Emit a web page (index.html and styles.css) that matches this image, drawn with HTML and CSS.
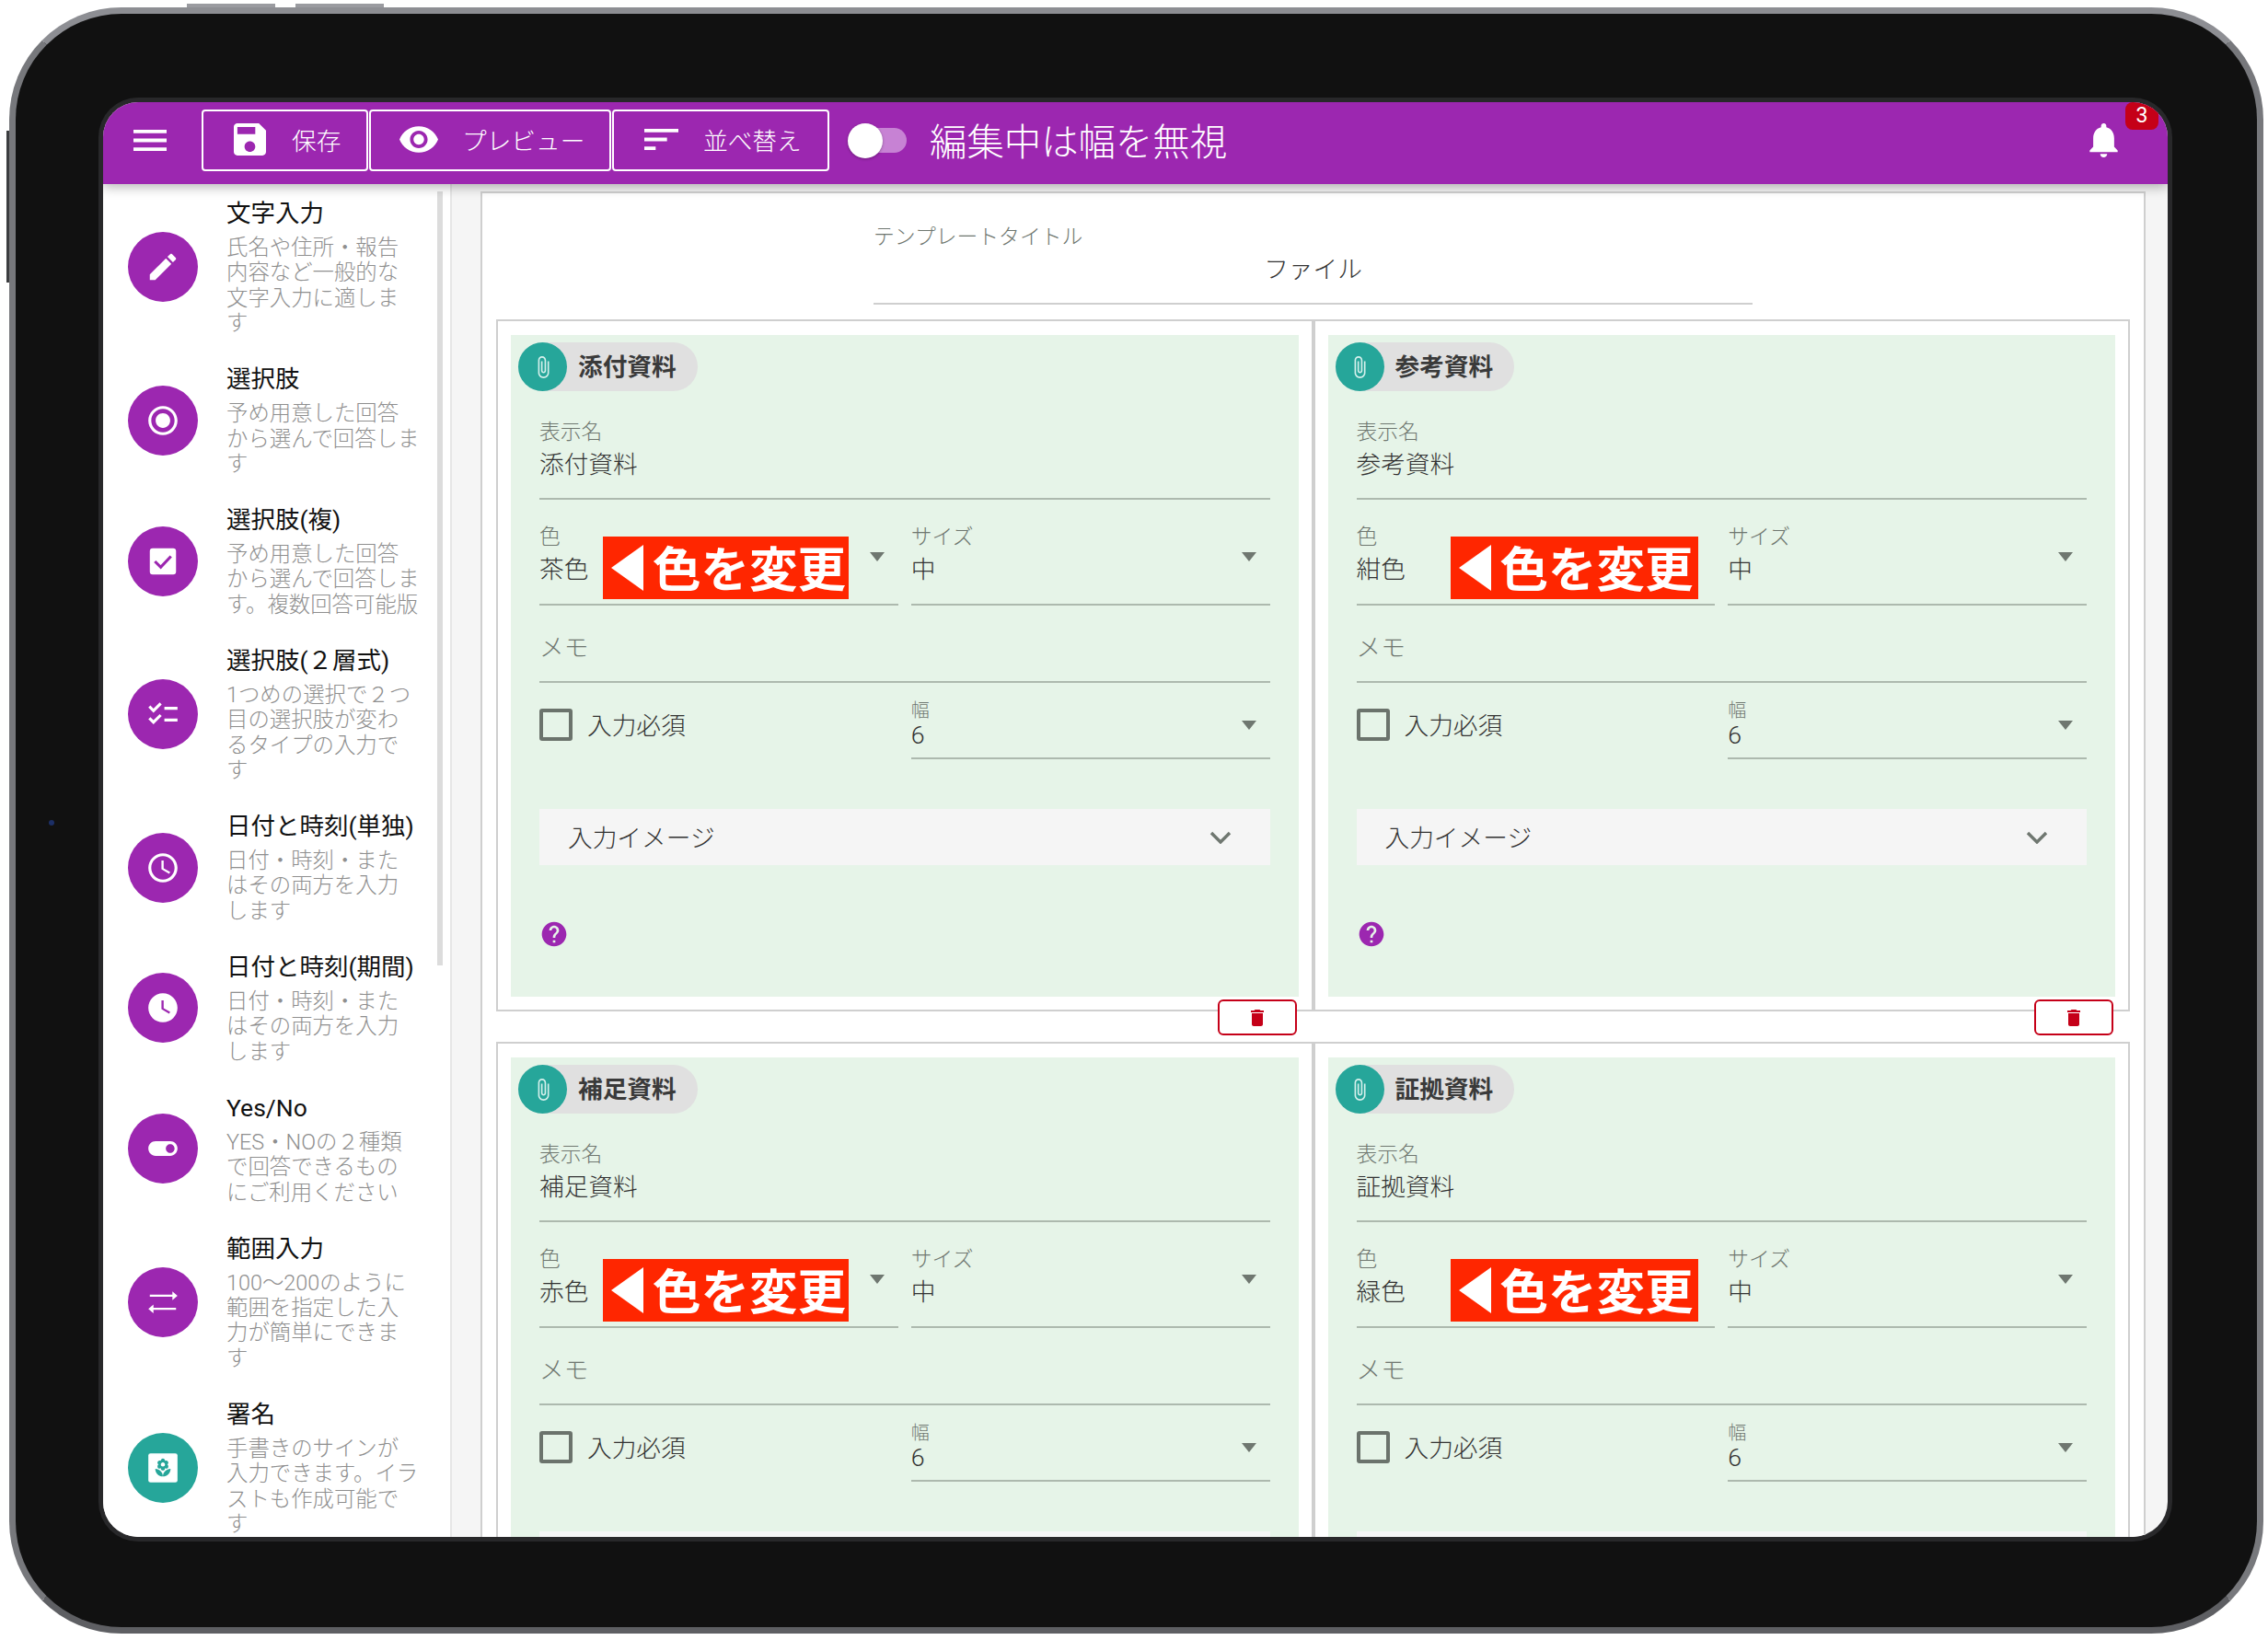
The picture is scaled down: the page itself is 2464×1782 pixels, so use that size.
FILE: index.html
```html
<!DOCTYPE html>
<html lang="ja">
<head>
<meta charset="utf-8">
<title>テンプレート編集</title>
<link rel="stylesheet" href="styles.css">
</head>
<body>

<svg class="defs" width="0" height="0">
  <symbol id="i-clip" viewBox="0 0 24 24"><path d="M16.5 6v11.5c0 2.21-1.79 4-4 4s-4-1.79-4-4V5c0-1.38 1.12-2.5 2.5-2.5s2.5 1.12 2.5 2.5v10.5c0 .55-.45 1-1 1s-1-.45-1-1V6H10v9.5c0 1.38 1.12 2.5 2.5 2.5s2.5-1.12 2.5-2.5V5c0-2.21-1.79-4-4-4S7 2.79 7 5v12.5c0 3.04 2.46 5.5 5.5 5.5s5.5-2.46 5.5-5.5V6h-1.5z"/></symbol>
  <symbol id="i-help" viewBox="0 0 24 24"><path d="M12 2C6.48 2 2 6.48 2 12s4.48 10 10 10 10-4.48 10-10S17.52 2 12 2zm1 17h-2v-2h2v2zm2.07-7.75l-.9.92C13.45 12.9 13 13.5 13 15h-2v-.5c0-1.1.45-2.1 1.17-2.83l1.24-1.26c.37-.36.59-.86.59-1.41 0-1.1-.9-2-2-2s-2 .9-2 2H8c0-2.21 1.79-4 4-4s4 1.79 4 4c0 .88-.36 1.68-.93 2.25z"/></symbol>
  <symbol id="i-trash" viewBox="0 0 24 24"><path d="M6 19c0 1.1.9 2 2 2h8c1.1 0 2-.9 2-2V7H6v12zM19 4h-3.5l-1-1h-5l-1 1H5v2h14V4z"/></symbol>
  <symbol id="i-chev" viewBox="0 0 24 14"><path d="M2 2l10 10L22 2" fill="none" stroke="#6f7770" stroke-width="3.4"/></symbol>
  <symbol id="i-clock" viewBox="0 0 24 24"><path d="M11.99 2C6.47 2 2 6.48 2 12s4.47 10 9.99 10C17.52 22 22 17.52 22 12S17.52 2 11.99 2zM12 20c-4.42 0-8-3.58-8-8s3.58-8 8-8 8 3.58 8 8-3.58 8-8 8zm.5-13H11v6l5.25 3.15.75-1.23-4.5-2.67z"/></symbol>
</svg>

<div class="device">
  <i class="hw hw-top1"></i>
  <i class="hw hw-top2"></i>
  <i class="hw hw-left"></i>
  <i class="camera"></i>

  <div class="screen">
    <header class="topbar">
      <svg class="ico menu-ico" viewBox="3 6 18 12" preserveAspectRatio="none"><path d="M3 18h18v-2H3v2zm0-5h18v-2H3v2zm0-7v2h18V6H3z"/></svg>
      <div class="btn btn-save">
        <svg class="ico save-ico" viewBox="3 3 18 18"><path d="M17 3H5c-1.11 0-2 .9-2 2v14c0 1.1.89 2 2 2h14c1.1 0 2-.9 2-2V7l-4-4zm-5 16c-1.66 0-3-1.34-3-3s1.34-3 3-3 3 1.34 3 3-1.34 3-3 3zm3-10H5V5h10v4z"/></svg>
        保存
      </div>
      <div class="btn btn-preview">
        <svg class="ico eye-ico" viewBox="1 4.5 22 15"><path d="M12 4.5C7 4.5 2.73 7.61 1 12c1.73 4.39 6 7.5 11 7.5s9.27-3.11 11-7.5c-1.73-4.39-6-7.5-11-7.5zM12 17c-2.76 0-5-2.24-5-5s2.24-5 5-5 5 2.24 5 5-2.24 5-5 5zm0-8c-1.66 0-3 1.34-3 3s1.34 3 3 3 3-1.34 3-3-1.34-3-3-3z"/></svg>
        プレビュー
      </div>
      <div class="btn btn-sort">
        <svg class="ico sort-ico" viewBox="3 6 18 12" preserveAspectRatio="none"><path d="M3 18h6v-2H3v2zM3 6v2h18V6H3zm0 7h12v-2H3v2z"/></svg>
        並べ替え
      </div>
      <div class="toggle"><span class="thumb"></span></div>
      <div class="bar-title">編集中は幅を無視</div>
      <svg class="ico bell-ico" viewBox="4 2.5 16 19.5"><path d="M12 22c1.1 0 2-.9 2-2h-4c0 1.1.89 2 2 2zm6-6v-5c0-3.07-1.64-5.64-4.5-6.32V4c0-.83-.67-1.5-1.5-1.5s-1.5.67-1.5 1.5v.68C7.63 5.36 6 7.92 6 11v5l-2 2v1h16v-1l-2-2z"/></svg>
      <span class="badge">3</span>
    </header>

    <div class="body">
      <aside class="side">
        <div class="scroll-thumb"></div>

        <div class="tool">
          <div class="tool-ic"><svg viewBox="0 0 24 24"><path d="M20.71 7.04c.39-.39.39-1.04 0-1.41l-2.34-2.34c-.37-.39-1.02-.39-1.41 0l-1.84 1.83 3.75 3.75M3 17.25V21h3.75L17.81 9.93l-3.75-3.75L3 17.25z"/></svg></div>
          <div class="tool-txt">
            <div class="tool-name">文字入力</div>
            <div class="tool-desc">氏名や住所・報告<br>内容など一般的な<br>文字入力に適しま<br>す</div>
          </div>
        </div>
        <div class="tool">
          <div class="tool-ic"><svg viewBox="0 0 24 24"><path d="M12 7c-2.76 0-5 2.24-5 5s2.24 5 5 5 5-2.24 5-5-2.24-5-5-5zm0-5C6.48 2 2 6.48 2 12s4.48 10 10 10 10-4.48 10-10S17.52 2 12 2zm0 18c-4.42 0-8-3.58-8-8s3.58-8 8-8 8 3.58 8 8-3.58 8-8 8z"/></svg></div>
          <div class="tool-txt">
            <div class="tool-name">選択肢</div>
            <div class="tool-desc">予め用意した回答<br>から選んで回答しま<br>す</div>
          </div>
        </div>
        <div class="tool">
          <div class="tool-ic"><svg viewBox="0 0 24 24"><rect x="3" y="3" width="18" height="18" rx="2"/><path d="M6.5 12l4 4 7-7.5" fill="none" stroke="#9c27b0" stroke-width="2"/></svg></div>
          <div class="tool-txt">
            <div class="tool-name">選択肢(複)</div>
            <div class="tool-desc">予め用意した回答<br>から選んで回答しま<br>す。複数回答可能版</div>
          </div>
        </div>
        <div class="tool">
          <div class="tool-ic"><svg viewBox="0 0 24 24"><path d="M22 7h-9v2h9V7zm0 8h-9v2h9v-2zM5.54 11L2 7.46l1.41-1.41 2.12 2.12 4.24-4.24 1.41 1.41L5.54 11zm0 8L2 15.46l1.41-1.41 2.12 2.12 4.24-4.24 1.41 1.41L5.54 19z"/></svg></div>
          <div class="tool-txt">
            <div class="tool-name">選択肢(２層式)</div>
            <div class="tool-desc">1つめの選択で２つ<br>目の選択肢が変わ<br>るタイプの入力で<br>す</div>
          </div>
        </div>
        <div class="tool">
          <div class="tool-ic"><svg viewBox="0 0 24 24"><use href="#i-clock"/></svg></div>
          <div class="tool-txt">
            <div class="tool-name">日付と時刻(単独)</div>
            <div class="tool-desc">日付・時刻・また<br>はその両方を入力<br>します</div>
          </div>
        </div>
        <div class="tool">
          <div class="tool-ic"><svg viewBox="0 0 24 24"><path d="M11.99 2C6.47 2 2 6.48 2 12s4.47 10 9.99 10C17.52 22 22 17.52 22 12S17.52 2 11.99 2zm4.26 14.15L11 13V7h1.5v5.25l4.5 2.67-.75 1.23z"/></svg></div>
          <div class="tool-txt">
            <div class="tool-name">日付と時刻(期間)</div>
            <div class="tool-desc">日付・時刻・また<br>はその両方を入力<br>します</div>
          </div>
        </div>
        <div class="tool">
          <div class="tool-ic"><svg viewBox="0 0 24 24"><path d="M17 7H7c-2.76 0-5 2.24-5 5s2.24 5 5 5h10c2.76 0 5-2.24 5-5s-2.24-5-5-5zm0 8c-1.66 0-3-1.34-3-3s1.34-3 3-3 3 1.34 3 3-1.34 3-3 3z"/></svg></div>
          <div class="tool-txt">
            <div class="tool-name">Yes/No</div>
            <div class="tool-desc">YES・NOの２種類<br>で回答できるもの<br>にご利用ください</div>
          </div>
        </div>
        <div class="tool">
          <div class="tool-ic"><svg viewBox="0 0 24 24"><path d="M18.5 4.500l3.500 3-3.500 3V8.200H3V6.800h15.500zM5.500 13.500L2 16.500l3.500 3v-2.300H21v-1.400H5.500z"/></svg></div>
          <div class="tool-txt">
            <div class="tool-name">範囲入力</div>
            <div class="tool-desc">100〜200のように<br>範囲を指定した入<br>力が簡単にできま<br>す</div>
          </div>
        </div>
        <div class="tool">
          <div class="tool-ic teal"><svg viewBox="0 0 24 24"><rect x="2" y="2" width="20" height="20" rx="1.5"/><path transform="translate(5 5) scale(.583)" fill="#26a69a" d="M12 22c4.97 0 9-4.03 9-9-4.97 0-9 4.03-9 9zM5.6 10.25c0 1.38 1.12 2.5 2.5 2.5.53 0 1.01-.16 1.42-.44l-.02.19c0 1.38 1.12 2.5 2.5 2.5s2.5-1.12 2.5-2.5l-.02-.19c.4.28.89.44 1.42.44 1.38 0 2.5-1.12 2.5-2.5 0-1-.59-1.85-1.43-2.25.84-.4 1.43-1.25 1.43-2.25 0-1.38-1.12-2.5-2.5-2.5-.53 0-1.01.16-1.42.44l.02-.19C14.5 2.12 13.38 1 12 1S9.5 2.12 9.5 3.5l.02.19c-.4-.28-.89-.44-1.42-.44-1.38 0-2.5 1.12-2.5 2.5 0 1 .59 1.85 1.43 2.25-.84.4-1.43 1.25-1.43 2.25zM12 5.500c1.380 0 2.500 1.120 2.500 2.500s-1.120 2.500-2.500 2.500S9.500 9.380 9.500 8s1.120-2.500 2.500-2.500zM3 13c0 4.970 4.030 9 9 9 0-4.970-4.030-9-9-9z"/></svg></div>
          <div class="tool-txt">
            <div class="tool-name">署名</div>
            <div class="tool-desc">手書きのサインが<br>入力できます。イラ<br>ストも作成可能で<br>す</div>
          </div>
        </div>
      </aside>

      <main class="main">
        <div class="card">
          <div class="tpl-title">
            <div class="lbl">テンプレートタイトル</div>
            <div class="val">ファイル</div>
          </div>

          <div class="grid">

            <section class="panel">
              <div class="green">
                <div class="chip"><span class="chip-av"><svg><use href="#i-clip"/></svg></span><span class="chip-txt">添付資料</span></div>
                <div class="field f-name"><div class="lbl">表示名</div><div class="val">添付資料</div></div>
                <div class="row row-color">
                  <div class="field sel"><div><div class="lbl">色</div><div class="val">茶色</div></div><i class="arrow"></i><div class="note"><i class="note-tri"></i><span class="note-txt">色を変更</span></div></div>
                  <div class="field sel"><div><div class="lbl">サイズ</div><div class="val">中</div></div><i class="arrow"></i></div>
                </div>
                <div class="field f-memo"><div class="val memo">メモ</div></div>
                <div class="row row-req">
                  <label class="req"><i class="box"></i><span class="req-txt">入力必須</span></label>
                  <div class="field sel"><div><div class="lbl sm">幅</div><div class="val">6</div></div><i class="arrow"></i></div>
                </div>
                <div class="expand"><span class="expand-txt">入力イメージ</span><svg class="chev"><use href="#i-chev"/></svg></div>
                <svg class="help"><use href="#i-help"/></svg>
              </div>
              <div class="del"><svg><use href="#i-trash"/></svg></div>
            </section>

            <section class="panel panel-r">
              <div class="green">
                <div class="chip"><span class="chip-av"><svg><use href="#i-clip"/></svg></span><span class="chip-txt">参考資料</span></div>
                <div class="field f-name"><div class="lbl">表示名</div><div class="val">参考資料</div></div>
                <div class="row row-color">
                  <div class="field sel"><div><div class="lbl">色</div><div class="val">紺色</div></div><div class="note"><i class="note-tri"></i><span class="note-txt">色を変更</span></div></div>
                  <div class="field sel"><div><div class="lbl">サイズ</div><div class="val">中</div></div><i class="arrow"></i></div>
                </div>
                <div class="field f-memo"><div class="val memo">メモ</div></div>
                <div class="row row-req">
                  <label class="req"><i class="box"></i><span class="req-txt">入力必須</span></label>
                  <div class="field sel"><div><div class="lbl sm">幅</div><div class="val">6</div></div><i class="arrow"></i></div>
                </div>
                <div class="expand"><span class="expand-txt">入力イメージ</span><svg class="chev"><use href="#i-chev"/></svg></div>
                <svg class="help"><use href="#i-help"/></svg>
              </div>
              <div class="del"><svg><use href="#i-trash"/></svg></div>
            </section>

            <section class="panel">
              <div class="green">
                <div class="chip"><span class="chip-av"><svg><use href="#i-clip"/></svg></span><span class="chip-txt">補足資料</span></div>
                <div class="field f-name"><div class="lbl">表示名</div><div class="val">補足資料</div></div>
                <div class="row row-color">
                  <div class="field sel"><div><div class="lbl">色</div><div class="val">赤色</div></div><i class="arrow"></i><div class="note"><i class="note-tri"></i><span class="note-txt">色を変更</span></div></div>
                  <div class="field sel"><div><div class="lbl">サイズ</div><div class="val">中</div></div><i class="arrow"></i></div>
                </div>
                <div class="field f-memo"><div class="val memo">メモ</div></div>
                <div class="row row-req">
                  <label class="req"><i class="box"></i><span class="req-txt">入力必須</span></label>
                  <div class="field sel"><div><div class="lbl sm">幅</div><div class="val">6</div></div><i class="arrow"></i></div>
                </div>
                <div class="expand"></div>
              </div>
            </section>

            <section class="panel panel-r">
              <div class="green">
                <div class="chip"><span class="chip-av"><svg><use href="#i-clip"/></svg></span><span class="chip-txt">証拠資料</span></div>
                <div class="field f-name"><div class="lbl">表示名</div><div class="val">証拠資料</div></div>
                <div class="row row-color">
                  <div class="field sel"><div><div class="lbl">色</div><div class="val">緑色</div></div><div class="note"><i class="note-tri"></i><span class="note-txt">色を変更</span></div></div>
                  <div class="field sel"><div><div class="lbl">サイズ</div><div class="val">中</div></div><i class="arrow"></i></div>
                </div>
                <div class="field f-memo"><div class="val memo">メモ</div></div>
                <div class="row row-req">
                  <label class="req"><i class="box"></i><span class="req-txt">入力必須</span></label>
                  <div class="field sel"><div><div class="lbl sm">幅</div><div class="val">6</div></div><i class="arrow"></i></div>
                </div>
                <div class="expand"></div>
              </div>
            </section>

          </div>
        </div>
      </main>
    </div>
  </div>
</div>

</body>
</html>
```

FILE: styles.css
```css
html, body {
  margin: 0;
  padding: 0;
  height: 1782px;
  overflow: hidden;
  background: #fff;
  font-family: Roboto, "Noto Sans CJK JP", sans-serif;
  color: #333;
}

.defs {
  position: absolute;
}

/* tablet frame */
.device {
  position: relative;
  box-sizing: border-box;
  display: flex;
  width: 2449px;
  height: 1767px;
  margin: 8px 0 0 10px;
  padding: 96px 97px 98px 95px;
  background: #111;
  border: 7px solid #77787c;
  border-top-color: #8d8e93;
  border-bottom-color: #5e5f63;
  border-radius: 122px;
}

.hw {
  position: absolute;
  background: #9a9ba0;
}

.hw-top1 {
  top: -11px;
  left: 186px;
  width: 96px;
  height: 4px;
}

.hw-top2 {
  top: -11px;
  left: 304px;
  width: 96px;
  height: 4px;
}

.hw-left {
  top: 127px;
  left: -10px;
  width: 3px;
  height: 165px;
  background: #3c3d40;
}

.camera {
  position: absolute;
  top: 876px;
  left: 36px;
  width: 6px;
  height: 6px;
  border-radius: 50%;
  background: #1c2f66;
}

.screen {
  flex: 1;
  display: flex;
  flex-direction: column;
  overflow: hidden;
  background: #f5f5f5;
  border-radius: 38px;
  box-shadow: 0 0 0 5px #28282a;
}

/* top bar */
.topbar {
  position: relative;
  z-index: 2;
  box-sizing: border-box;
  display: flex;
  align-items: center;
  flex: none;
  height: 89px;
  padding: 0 0 6px 33px;
  background: #9c27b0;
  color: #fff;
  box-shadow: 0 3px 12px rgba(0, 0, 0, .3);
}

.ico {
  fill: #fff;
  flex: none;
}

.menu-ico {
  width: 36px;
  height: 23px;
  margin-right: 38px;
}

.btn {
  box-sizing: border-box;
  display: flex;
  align-items: center;
  height: 67px;
  margin-right: 1px;
  padding-bottom: 2px;
  font-size: 26.7px;
  font-weight: 300;
  border: 2px solid #fff;
  border-radius: 4px;
}

.btn-save {
  width: 181px;
  padding-left: 33px;
}

.save-ico {
  width: 35px;
  height: 35px;
  margin-right: 28px;
}

.btn-preview {
  width: 263px;
  padding-left: 31px;
}

.eye-ico {
  width: 42px;
  height: 29px;
  margin-right: 26px;
}

.btn-sort {
  width: 236px;
  padding-left: 33px;
}

.sort-ico {
  width: 37px;
  height: 23px;
  margin-right: 27px;
}

.toggle {
  position: relative;
  width: 60px;
  height: 27px;
  margin-left: 23px;
  background: #c782d4;
  border-radius: 14px;
}

.thumb {
  position: absolute;
  top: -5px;
  left: -4px;
  width: 38px;
  height: 38px;
  border-radius: 50%;
  background: #fff;
  box-shadow: 0 1px 3px rgba(0, 0, 0, .3);
}

.bar-title {
  flex: 1;
  margin-left: 25px;
  padding-bottom: 3px;
  font-size: 40.4px;
  font-weight: 300;
}

.bell-ico {
  width: 31px;
  height: 37px;
  margin-right: 54px;
}

.badge {
  position: absolute;
  top: 0;
  right: 10px;
  width: 36px;
  height: 30px;
  background: #c50018;
  border-radius: 8px 0 8px 8px;
  font-size: 23px;
  line-height: 30px;
  text-align: center;
}

.body {
  flex: 1;
  display: flex;
  min-height: 0;
}

/* tool list */
.side {
  position: relative;
  box-sizing: border-box;
  flex: none;
  width: 379px;
  padding: 15px 0 0 27px;
  overflow: hidden;
  background: #fff;
  border-right: 2px solid #e6e6e6;
}

.scroll-thumb {
  position: absolute;
  top: 8px;
  right: 8px;
  width: 6px;
  height: 841px;
  background: #dcdcdc;
}

.tool {
  display: flex;
  align-items: center;
  margin-bottom: 29.6px;
}

.tool-ic {
  display: flex;
  align-items: center;
  justify-content: center;
  flex: none;
  width: 76px;
  height: 76px;
  margin-right: 31px;
  border-radius: 50%;
  background: #9c27b0;
}

.tool-ic svg {
  width: 38px;
  height: 38px;
  fill: #fff;
}

.tool-ic.teal {
  background: #26a69a;
}

.tool-name {
  height: 34px;
  font-size: 26.5px;
  line-height: 33px;
  color: #111;
  white-space: nowrap;
}

.tool-desc {
  margin-top: 7px;
  font-size: 23.4px;
  font-weight: 300;
  line-height: 27.4px;
  color: #8f8f8f;
  white-space: nowrap;
}

/* form area */
.main {
  flex: 1;
  min-width: 0;
  padding: 8px 24px 0 31px;
}

.card {
  box-sizing: border-box;
  height: 1600px;
  padding: 32px 15px 0;
  background: #fff;
  border: 2px solid #cfcfcf;
}

.lbl {
  height: 30px;
  font-size: 22.8px;
  font-weight: 300;
  line-height: 32px;
  color: #6f7770;
  white-space: nowrap;
}

.val {
  height: 36px;
  margin-top: 3px;
  font-size: 26.7px;
  font-weight: 300;
  line-height: 36px;
  color: #333;
  white-space: nowrap;
}

.tpl-title {
  width: 955px;
  margin: 0 auto 16px;
  padding-bottom: 18px;
  border-bottom: 2px solid #cfcfcf;
}

.tpl-title .val {
  text-align: center;
}

.grid {
  display: grid;
  grid-template-columns: 1fr 1fr;
  row-gap: 33px;
}

.panel {
  position: relative;
  padding: 15px 14px 14px;
  background: #fff;
  border: 2px solid #cfcfcf;
}

.green {
  box-sizing: border-box;
  height: 719px;
  padding: 8px 31px 0;
  background: #e6f4e8;
}

.chip {
  display: inline-flex;
  align-items: center;
  height: 53px;
  margin-left: -23px;
  padding-right: 23px;
  font-size: 26.7px;
  font-weight: 700;
  background: #e0e0e0;
  border-radius: 27px;
  vertical-align: top;
}

.chip-txt {
  padding-bottom: 5px;
  color: #3a3a3a;
}

.chip-av {
  display: flex;
  align-items: center;
  justify-content: center;
  width: 53px;
  height: 53px;
  margin-right: 12px;
  border-radius: 50%;
  background: #26a69a;
}

.chip-av svg {
  width: 26px;
  height: 26px;
  fill: #d5f0ec;
}

.field {
  border-bottom: 2px solid #adb9ae;
}

.f-name {
  margin-top: 29px;
  padding-bottom: 18px;
}

.row {
  display: grid;
  grid-template-columns: 1fr 1fr;
  column-gap: 14px;
}

.row-color {
  margin-top: 25px;
}

.sel {
  position: relative;
  display: flex;
  align-items: center;
  justify-content: space-between;
  padding-bottom: 19px;
}

.arrow {
  flex: none;
  width: 0;
  height: 0;
  margin: 5px 15px 0 0;
  border-top: 10px solid #6f7770;
  border-left: 8.5px solid transparent;
  border-right: 8.5px solid transparent;
}

/* red annotation over the colour select */
.note {
  position: absolute;
  top: 15px;
  left: 69px;
  box-sizing: border-box;
  display: flex;
  align-items: center;
  width: 267px;
  height: 68px;
  padding-left: 9px;
  font-size: 52.5px;
  font-weight: 700;
  color: #fff;
  background: #ff2600;
  white-space: nowrap;
}

.panel-r .note {
  left: 102px;
  width: 269px;
}

.note-txt {
  padding-bottom: 5px;
}

.note-tri {
  flex: none;
  width: 0;
  height: 0;
  margin-right: 10px;
  border-top: 25px solid transparent;
  border-bottom: 25px solid transparent;
  border-right: 35px solid #fff;
}

.f-memo {
  margin-top: 27px;
  padding-bottom: 19px;
}

.memo {
  margin-top: 0;
  line-height: 38px;
  color: #6f7770;
}

.row-req {
  margin-top: 18px;
}

.row-req .sel {
  padding-bottom: 9px;
}

.row-req .arrow {
  margin-top: 2px;
}

.lbl.sm {
  height: 24px;
  font-size: 20px;
  line-height: 24px;
}

.row-req .val {
  height: 30px;
  margin-top: 0;
  line-height: 30px;
}

.req {
  display: flex;
  align-items: center;
  padding-bottom: 10px;
  font-size: 26.7px;
  font-weight: 300;
  color: #333;
}

.req-txt {
  padding-bottom: 3px;
}

.box {
  box-sizing: border-box;
  flex: none;
  width: 36px;
  height: 35px;
  margin-right: 16px;
  border: 4px solid #6b736c;
  border-radius: 3px;
}

.expand {
  display: flex;
  align-items: center;
  justify-content: space-between;
  height: 61px;
  margin-top: 54px;
  padding: 0 42px 0 31px;
  font-size: 26.7px;
  font-weight: 300;
  color: #333;
  background: #f5f5f5;
}

.expand-txt {
  padding-bottom: 3px;
}

.chev {
  width: 24px;
  height: 14px;
}

.help {
  display: block;
  width: 32px;
  height: 32px;
  margin-top: 59px;
  fill: #9c27b0;
}

.del {
  position: absolute;
  right: 16px;
  bottom: -28px;
  z-index: 1;
  box-sizing: border-box;
  display: flex;
  align-items: center;
  justify-content: center;
  width: 86px;
  height: 39px;
  background: #fff;
  border: 2px solid #c50018;
  border-radius: 6px;
}

.del svg {
  width: 24px;
  height: 24px;
  fill: #c50018;
}
```
